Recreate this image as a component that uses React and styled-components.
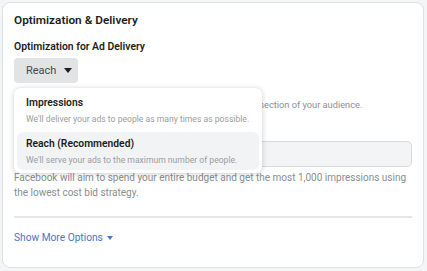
import React from "react";
import styled, { createGlobalStyle } from "styled-components";

const Global = createGlobalStyle`
  html, body { margin: 0; padding: 0; background: #f4f5f6; }
  body { font-family: Roboto, "Liberation Sans", Arial, sans-serif; -webkit-font-smoothing: antialiased; }
`;

const Card = styled.div`
  margin: 2px;
  width: 422px;
  height: 266px;
  box-sizing: border-box;
  background: #fff;
  border: 1px solid #dfe0e2;
  border-radius: 8px;
  padding: 9px 11px 0;
  position: relative;
`;

const Title = styled.div`
  font-size: 11.8px;
  line-height: 16px;
  font-weight: 600;
  color: #1c1e21;
`;

const Label = styled.div`
  margin-top: 12px;
  font-size: 10.4px;
  line-height: 14px;
  font-weight: 600;
  color: #1c1e21;
`;

const SelectWrap = styled.div`
  position: relative;
  margin-top: 4px;
  display: inline-block;
`;

const SelectButton = styled.div`
  width: 64px;
  height: 25px;
  box-sizing: border-box;
  border-radius: 4px;
  background: #e2e3e5;
  display: flex;
  align-items: center;
  padding-left: 12px;
  gap: 8px;
  font-size: 11px;
  color: #444950;
`;

const Caret = styled.svg`
  display: block;
  flex: none;
`;

const Menu = styled.div`
  position: absolute;
  top: 30px;
  left: 0;
  width: 248px;
  box-sizing: border-box;
  background: #fff;
  border-radius: 6px;
  box-shadow: 0 1px 6px rgba(0, 0, 0, 0.18), 0 0 1px rgba(0, 0, 0, 0.12);
  padding: 3px;
  display: flex;
  flex-direction: column;
  gap: 3px;
  z-index: 2;
`;

const Item = styled.div`
  height: 38px;
  box-sizing: border-box;
  padding: 5px 9px 0;
  border-radius: 6px;
  background: ${(p) => (p.$active ? "#f2f3f4" : "transparent")};
`;

const ItemTitle = styled.div`
  font-size: 10.3px;
  line-height: 14px;
  font-weight: 600;
  color: #1c1e21;
`;

const ItemDesc = styled.div`
  margin-top: 3px;
  font-size: 8.6px;
  line-height: 12px;
  color: #9a9da1;
  white-space: nowrap;
`;

const Note = styled.div`
  margin-top: 15px;
  font-size: 9.25px;
  line-height: 13px;
  color: #8d9095;
  white-space: nowrap;
`;

const HiddenLabel = styled.div`
  margin-top: 9px;
  font-size: 10.4px;
  line-height: 14px;
  font-weight: 600;
  color: #1c1e21;
`;

const Input = styled.div`
  margin-top: 7px;
  height: 26px;
  box-sizing: border-box;
  border: 1px solid #d8d9db;
  border-radius: 5px;
  background: #f3f4f5;
`;

const Helper = styled.div`
  margin-top: 3px;
  font-size: 10px;
  line-height: 15px;
  color: #8a8d91;
`;

const Divider = styled.div`
  margin-top: 16px;
  height: 2px;
  background: #e4e5e7;
`;

const MoreLink = styled.div`
  margin-top: 12px;
  display: flex;
  align-items: center;
  gap: 4px;
  font-size: 10.2px;
  line-height: 15px;
  color: #4b76c8;
`;

export default function App() {
  return (
    <>
      <Global />
      <Card>
        <Title>Optimization &amp; Delivery</Title>
        <Label>Optimization for Ad Delivery</Label>
        <SelectWrap>
          <SelectButton>
            Reach
            <Caret width="8" height="5" viewBox="0 0 8 5">
              <path d="M0 0H8L4 5Z" fill="#1c1e21" />
            </Caret>
          </SelectButton>
          <Menu>
            <Item>
              <ItemTitle>Impressions</ItemTitle>
              <ItemDesc>We'll deliver your ads to people as many times as possible.</ItemDesc>
            </Item>
            <Item $active>
              <ItemTitle>Reach (Recommended)</ItemTitle>
              <ItemDesc>We'll serve your ads to the maximum number of people.</ItemDesc>
            </Item>
          </Menu>
        </SelectWrap>
        <Note>
          We'll deliver your ads to people in the widest possible cross-section of your audience.
        </Note>
        <HiddenLabel>Impression Cap (Optional)</HiddenLabel>
        <Input />
        <Helper>
          Facebook will aim to spend your entire budget and get the most 1,000 impressions using
          the lowest cost bid strategy.
        </Helper>
        <Divider />
        <MoreLink>
          Show More Options
          <Caret width="6" height="4" viewBox="0 0 6 4">
            <path d="M0 0H6L3 4Z" fill="#4b76c8" />
          </Caret>
        </MoreLink>
      </Card>
    </>
  );
}
